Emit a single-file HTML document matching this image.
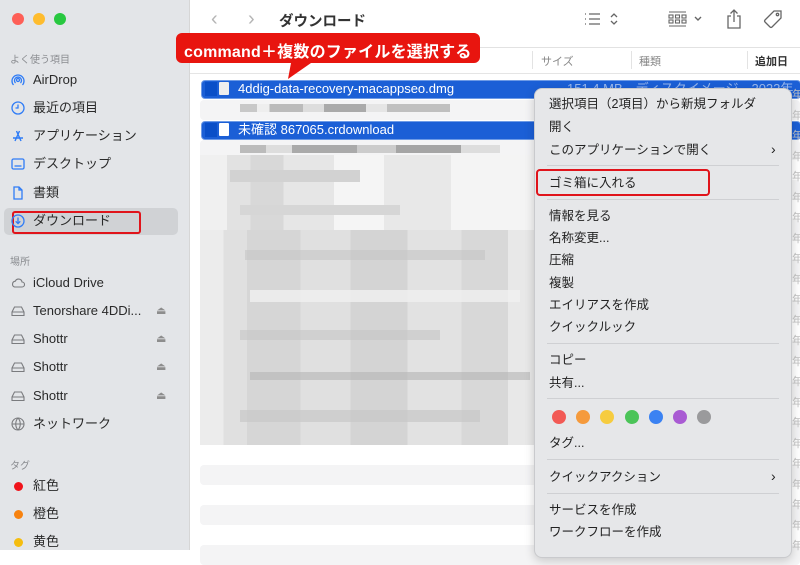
<!DOCTYPE html>
<html><head><meta charset="utf-8"><style>
*{margin:0;padding:0;box-sizing:border-box}
body{width:800px;height:550px;overflow:hidden;position:relative;background:#fff;font-family:"Liberation Sans","Noto Sans CJK JP",sans-serif;color:#222}
.abs{position:absolute}
#side{left:0;top:0;width:190px;height:550px;background:#e3e5e8;border-right:1px solid #d6d6d6}
.dot{position:absolute;top:13px;width:12px;height:12px;border-radius:50%}
.sh{position:absolute;left:10px;font-size:10px;color:#8a8c90}
.si{position:absolute;left:33px;font-size:13px;color:#2a2a2a;line-height:16px}
.ic{position:absolute;left:11px;width:14px;height:14px}
.ej{position:absolute;left:156px;font-size:11px;color:#8d8d8d}
.tag{position:absolute;left:14px;width:9px;height:9px;border-radius:50%}
.row{position:absolute;left:200px;width:600px;height:20px}
.stripe{background:#f4f4f5;border-radius:4px}
.sel{position:absolute;left:201px;width:600px;height:19px;background:#1b5fd6;border:1.5px solid #6e9be6;border-radius:4px;color:#fff;font-size:13px;line-height:16px}
#menu{left:534px;top:88px;width:258px;height:470px;background:#e6e7e9;border:1px solid #c9cacd;border-radius:8px;box-shadow:0 3px 10px rgba(0,0,0,.18)}
.mi{position:absolute;left:14px;font-size:12.5px;color:#222;line-height:15px}
.sep{position:absolute;left:12px;width:232px;height:1px;background:#cfd0d3}
.cc{position:absolute;top:321px;width:14px;height:14px;border-radius:50%}
.mz{position:absolute;left:200px;width:335px;height:10px}
</style></head><body>
<div id="side" class="abs">
<div class="dot" style="left:12px;background:#fe5f57"></div>
<div class="dot" style="left:33px;background:#febc2e"></div>
<div class="dot" style="left:54px;background:#28c840"></div>
<div class="sh" style="top:51px">よく使う項目</div>
<svg class="ic" style="top:73px" viewBox="0 0 14 14" fill="none" stroke="#2f7cf6" stroke-width="1.3"><circle cx="7" cy="7" r="1.5"/><path d="M4.5 10a3.5 3.5 0 1 1 5 0M2.5 12a6 6 0 1 1 9 0"/></svg>
<div class="si" style="top:72px">AirDrop</div>
<svg class="ic" style="top:101px" viewBox="0 0 14 14" fill="none" stroke="#2f7cf6" stroke-width="1.3"><circle cx="7" cy="7" r="6"/><path d="M7 3.5V7H4.5"/></svg>
<div class="si" style="top:100px">最近の項目</div>
<svg class="ic" style="top:129px" viewBox="0 0 14 14" fill="none" stroke="#2f7cf6" stroke-width="1.4"><path d="M4 12L8.5 2M10 12L5.5 2M2 9h10"/></svg>
<div class="si" style="top:128px">アプリケーション</div>
<svg class="ic" style="top:157px" viewBox="0 0 14 14" fill="none" stroke="#2f7cf6" stroke-width="1.3"><rect x="1" y="2" width="12" height="10" rx="1.5"/><path d="M3.5 9h7"/></svg>
<div class="si" style="top:156px">デスクトップ</div>
<svg class="ic" style="top:186px" viewBox="0 0 14 14" fill="none" stroke="#2f7cf6" stroke-width="1.3"><path d="M3 1h5l3 3v9H3z M8 1v3h3"/></svg>
<div class="si" style="top:185px">書類</div>
<div class="abs" style="left:4px;top:208px;width:174px;height:27px;background:#d0d2d5;border-radius:5px"></div>
<div class="abs" style="left:12px;top:211px;width:129px;height:23px;border:2px solid #e0141b;border-radius:3px"></div>
<svg class="ic" style="top:214px" viewBox="0 0 14 14" fill="none" stroke="#2f7cf6" stroke-width="1.3"><circle cx="7" cy="7" r="6"/><path d="M7 3.5v6M4.7 7.3L7 9.6l2.3-2.3"/></svg>
<div class="si" style="top:213px">ダウンロード</div>
<div class="sh" style="top:253px">場所</div>
<svg class="ic" style="top:276px" viewBox="0 0 14 14" fill="none" stroke="#7a7b7e" stroke-width="1.1"><path d="M3.5 11h7.5a2.5 2.5 0 0 0 0-5 3.5 3.5 0 0 0-6.7-.8A3 3 0 0 0 3.5 11z"/></svg>
<div class="si" style="top:275px">iCloud Drive</div>
<svg class="ic" style="top:304px" viewBox="0 0 14 14" fill="none" stroke="#7a7b7e" stroke-width="1.1"><path d="M1 8l2.5-5h7L13 8v3.5H1z M1 8h12"/></svg>
<div class="si" style="top:303px">Tenorshare 4DDi...</div><div class="ej" style="top:304px">⏏</div>
<svg class="ic" style="top:332px" viewBox="0 0 14 14" fill="none" stroke="#7a7b7e" stroke-width="1.1"><path d="M1 8l2.5-5h7L13 8v3.5H1z M1 8h12"/></svg>
<div class="si" style="top:331px">Shottr</div><div class="ej" style="top:332px">⏏</div>
<svg class="ic" style="top:360px" viewBox="0 0 14 14" fill="none" stroke="#7a7b7e" stroke-width="1.1"><path d="M1 8l2.5-5h7L13 8v3.5H1z M1 8h12"/></svg>
<div class="si" style="top:359px">Shottr</div><div class="ej" style="top:360px">⏏</div>
<svg class="ic" style="top:389px" viewBox="0 0 14 14" fill="none" stroke="#7a7b7e" stroke-width="1.1"><path d="M1 8l2.5-5h7L13 8v3.5H1z M1 8h12"/></svg>
<div class="si" style="top:388px">Shottr</div><div class="ej" style="top:389px">⏏</div>
<svg class="ic" style="top:417px" viewBox="0 0 14 14" fill="none" stroke="#7a7b7e" stroke-width="1.1"><circle cx="7" cy="7" r="6"/><path d="M1 7h12M7 1c-3 3-3 9 0 12M7 1c3 3 3 9 0 12"/></svg>
<div class="si" style="top:416px">ネットワーク</div>
<div class="sh" style="top:457px">タグ</div>
<div class="tag" style="top:482px;background:#f0141b"></div><div class="si" style="top:478px">紅色</div>
<div class="tag" style="top:510px;background:#f7820f"></div><div class="si" style="top:506px">橙色</div>
<div class="tag" style="top:538px;background:#f5bd0f"></div><div class="si" style="top:534px">黄色</div>
</div>

<div class="abs" style="left:211px;top:8px;font-size:20px;color:#b5b5b5">&#x2039;</div>
<div class="abs" style="left:248px;top:8px;font-size:20px;color:#b5b5b5">&#x203A;</div>
<div class="abs" style="left:279px;top:10px;font-size:14.5px;font-weight:bold;color:#333">ダウンロード</div>
<svg class="abs" style="left:584px;top:11px" width="36" height="16" viewBox="0 0 36 16" fill="none" stroke="#666" stroke-width="1.3"><path d="M1 3h1M5 3h11M1 8h1M5 8h11M1 13h1M5 13h11M27 6l3-3 3 3M27 10l3 3 3-3"/></svg>
<svg class="abs" style="left:668px;top:11px" width="38" height="16" viewBox="0 0 38 16" fill="none" stroke="#666" stroke-width="1.1"><path d="M1 1h17M1 15h17"/><rect x="1" y="4" width="4" height="3"/><rect x="7.5" y="4" width="4" height="3"/><rect x="14" y="4" width="4" height="3"/><rect x="1" y="9" width="4" height="3"/><rect x="7.5" y="9" width="4" height="3"/><rect x="14" y="9" width="4" height="3"/><path d="M27 6l3 3 3-3" stroke-width="1.4"/></svg>
<svg class="abs" style="left:726px;top:8px" width="16" height="22" viewBox="0 0 16 22" fill="none" stroke="#666" stroke-width="1.3"><path d="M5 8H2v12h12V8h-3M8 14V2M4.5 5.5L8 2l3.5 3.5"/></svg>
<svg class="abs" style="left:762px;top:9px" width="22" height="22" viewBox="0 0 22 22" fill="none" stroke="#666" stroke-width="1.3"><path d="M12 2h7v7L10 18a1.5 1.5 0 0 1-2 0l-5-5a1.5 1.5 0 0 1 0-2z"/><circle cx="15.5" cy="5.5" r="1.2"/></svg>

<div class="abs" style="left:190px;top:47px;width:610px;height:1px;background:#e2e2e2"></div>
<div class="abs" style="left:190px;top:73px;width:610px;height:1px;background:#e5e5e5"></div>
<div class="abs" style="left:532px;top:51px;width:1px;height:18px;background:#e3e3e3"></div>
<div class="abs" style="left:631px;top:51px;width:1px;height:18px;background:#e3e3e3"></div>
<div class="abs" style="left:747px;top:51px;width:1px;height:18px;background:#e3e3e3"></div>
<div class="abs" style="left:541px;top:53px;font-size:11px;color:#888">サイズ</div>
<div class="abs" style="left:639px;top:53px;font-size:11px;color:#888">種類</div>
<div class="abs" style="left:755px;top:53px;font-size:11px;color:#333;font-weight:bold">追加日</div>

<div class="row stripe" style="top:100px"></div>
<div class="row stripe" style="top:140px"></div>
<div class="row stripe" style="top:180px"></div>
<div class="row stripe" style="top:220px"></div>
<div class="row stripe" style="top:260px"></div>
<div class="row stripe" style="top:300px"></div>
<div class="row stripe" style="top:340px"></div>
<div class="row stripe" style="top:380px"></div>
<div class="row stripe" style="top:420px"></div>
<div class="row stripe" style="top:465px"></div>
<div class="row stripe" style="top:505px"></div>
<div class="row stripe" style="top:545px"></div>

<div class="sel" style="top:80px"><span class="abs" style="left:3px;top:1px;width:12px;height:14px;background:#0a4fc8"></span><span class="abs" style="left:17px;top:1px;width:10px;height:13px;background:#eee;border-radius:1px"></span><span class="abs" style="left:36px;top:0">4ddig-data-recovery-macappseo.dmg</span><span class="abs" style="left:365px;top:0;opacity:.55">151.4 MB　ディスクイメージ　2022年</span></div>
<div class="sel" style="top:121px"><span class="abs" style="left:3px;top:1px;width:12px;height:14px;background:#0a4fc8"></span><span class="abs" style="left:17px;top:1px;width:10px;height:13px;background:#fff;border-radius:1px"></span><span class="abs" style="left:36px;top:0">未確認 867065.crdownload</span></div>
<div class="mz" style="top:104px;height:8px;left:240px;width:210px;background:linear-gradient(90deg,#c8c8c8 0 8%,#eee 8% 14%,#bbb 14% 30%,#ddd 30% 40%,#aaa 40% 60%,#e5e5e5 60% 70%,#c0c0c0 70% 100%)"></div>
<div class="mz" style="top:145px;height:8px;left:240px;width:260px;background:linear-gradient(90deg,#bbb 0 10%,#ddd 10% 20%,#aaa 20% 45%,#ccc 45% 60%,#a5a5a5 60% 85%,#ddd 85% 100%)"></div>
<div class="mz" style="top:155px;height:80px;background:linear-gradient(90deg,#f0f0f0 0 8%,#e2e2e2 8% 15%,#d8d8d8 15% 25%,#e6e6e6 25% 40%,#f5f5f5 40% 55%,#e8e8e8 55% 75%,#f4f4f4 75% 100%)"></div>
<div class="mz" style="top:170px;height:12px;left:230px;width:130px;background:#d2d2d2"></div>
<div class="mz" style="top:205px;height:10px;left:240px;width:160px;background:#d6d6d6"></div>
<div class="mz" style="top:230px;height:215px;background:linear-gradient(90deg,#ececec 0 7%,#e0e0e0 7% 14%,#d6d6d6 14% 30%,#e0e0e0 30% 45%,#d4d4d4 45% 62%,#e2e2e2 62% 78%,#d8d8d8 78% 92%,#e8e8e8 92% 100%)"></div>
<div class="mz" style="top:250px;height:10px;left:245px;width:240px;background:#c4c4c4;opacity:.6"></div>
<div class="mz" style="top:290px;height:12px;left:250px;width:270px;background:#f0f0f0;opacity:.8"></div>
<div class="mz" style="top:330px;height:10px;left:240px;width:200px;background:#c4c4c4;opacity:.6"></div>
<div class="mz" style="top:372px;height:8px;left:250px;width:280px;background:#b4b4b4;opacity:.6"></div>
<div class="mz" style="top:410px;height:12px;left:240px;width:240px;background:#c8c8c8;opacity:.7"></div>
<div class="abs" style="left:792px;top:85px;font-size:11px;color:#c2c2c2;line-height:20.5px">年<br>年<br>年<br>年<br>年<br>年<br>年<br>年<br>年<br>年<br>年<br>年<br>年<br>年<br>年<br>年<br>年<br>年<br>年<br>年<br>年<br>年<br>年</div>

<svg class="abs" style="left:176px;top:33px" width="304" height="48" viewBox="0 0 304 48"><path d="M6 0h292a6 6 0 0 1 6 6v18a6 6 0 0 1-6 6H135L112 46l3-16H6a6 6 0 0 1-6-6V6a6 6 0 0 1 6-6z" fill="#e8150f"/></svg>
<div class="abs" style="left:184px;top:38px;font-size:16px;color:#fff;font-weight:bold;letter-spacing:0.2px">command＋複数のファイルを選択する</div>

<div id="menu" class="abs">
<div class="mi" style="top:8px">選択項目（2項目）から新規フォルダ</div>
<div class="mi" style="top:31px">開く</div>
<div class="mi" style="top:54px">このアプリケーションで開く</div><div class="mi" style="top:53px;left:236px;font-size:14px">›</div>
<div class="sep" style="top:76px"></div>
<div class="abs" style="left:1px;top:80px;width:174px;height:27px;border:2px solid #e0141b;border-radius:4px"></div>
<div class="mi" style="top:87px">ゴミ箱に入れる</div>
<div class="sep" style="top:110px"></div>
<div class="mi" style="top:120px">情報を見る</div>
<div class="mi" style="top:142px">名称変更...</div>
<div class="mi" style="top:164px">圧縮</div>
<div class="mi" style="top:187px">複製</div>
<div class="mi" style="top:209px">エイリアスを作成</div>
<div class="mi" style="top:231px">クイックルック</div>
<div class="sep" style="top:254px"></div>
<div class="mi" style="top:264px">コピー</div>
<div class="mi" style="top:287px">共有...</div>
<div class="sep" style="top:309px"></div>
<div class="cc" style="left:17px;background:#f25a55"></div>
<div class="cc" style="left:41px;background:#f59a3c"></div>
<div class="cc" style="left:65px;background:#f6cc3f"></div>
<div class="cc" style="left:90px;background:#4bc458"></div>
<div class="cc" style="left:114px;background:#3b82f2"></div>
<div class="cc" style="left:138px;background:#a95bd3"></div>
<div class="cc" style="left:162px;background:#9a9a9c"></div>
<div class="mi" style="top:347px">タグ...</div>
<div class="sep" style="top:370px"></div>
<div class="mi" style="top:381px">クイックアクション</div><div class="mi" style="top:380px;left:236px;font-size:14px">›</div>
<div class="sep" style="top:404px"></div>
<div class="mi" style="top:414px">サービスを作成</div>
<div class="mi" style="top:436px">ワークフローを作成</div>
</div>
</body></html>
